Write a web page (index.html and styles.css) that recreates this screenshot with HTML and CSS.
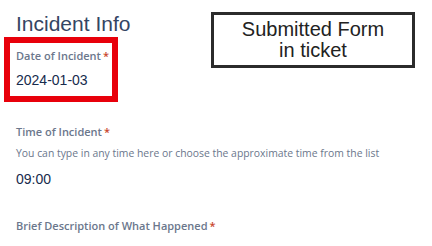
FILE: index.html
```html
<!DOCTYPE html>
<html>
<head>
<meta charset="utf-8">
<link rel="stylesheet" href="styles.css">
</head>
<body>
<div class="page">
  <h1 class="title">Incident Info</h1>
  <div class="field highlighted">
    <div class="label">Date of Incident<span class="req">*</span></div>
    <div class="value">2024-01-03</div>
  </div>
  <div class="field time">
    <div class="label">Time of Incident<span class="req">*</span></div>
    <div class="help">You can type in any time here or choose the approximate time from the list</div>
    <div class="value">09:00</div>
  </div>
  <div class="field brief">
    <div class="label">Brief Description of What Happened<span class="req">*</span></div>
  </div>
  <div class="note">Submitted Form<br>in ticket</div>
</div>
</body>
</html>
```
FILE: styles.css
```css
html, body {
  margin: 0;
  padding: 0;
  background: #ffffff;
}
.page {
  position: relative;
  width: 432px;
  height: 246px;
  overflow: hidden;
  padding-left: 16px;
  box-sizing: border-box;
}
.title {
  margin: 12px 0 1px 0;
  font-family: "Liberation Sans", Arial, sans-serif;
  font-weight: 400;
  font-size: 21px;
  line-height: 24px;
  color: #344563;
}
.field.highlighted {
  margin-left: -12px;
  width: 114px;
  box-sizing: border-box;
  border: 6px solid #e8000b;
  padding: 5px 0 7px 6px;
}
.label {
  font-family: "Open Sans", sans-serif;
  font-weight: 600;
  font-size: 11px;
  line-height: 16px;
  color: #6b778c;
  white-space: nowrap;
}
.req {
  color: #c9462b;
  margin-left: 2px;
}
.value {
  margin-top: 7px;
  font-family: "Liberation Sans", Arial, sans-serif;
  font-size: 14px;
  line-height: 18px;
  color: #172b4d;
}
.field.time {
  margin-top: 22px;
}
.help {
  margin-top: 6px;
  font-family: "Open Sans", sans-serif;
  font-size: 10.4px;
  line-height: 15px;
  color: #6b778c;
  white-space: nowrap;
}
.time .value {
  margin-top: 9px;
}
.field.brief {
  margin-top: 30px;
}
.note {
  position: absolute;
  left: 211px;
  top: 12px;
  width: 204px;
  height: 56px;
  box-sizing: border-box;
  border: 3px solid #2b2b2b;
  font-family: "Liberation Sans", Arial, sans-serif;
  font-size: 20px;
  line-height: 21px;
  color: #222222;
  text-align: center;
  padding-top: 4px;
}
```
